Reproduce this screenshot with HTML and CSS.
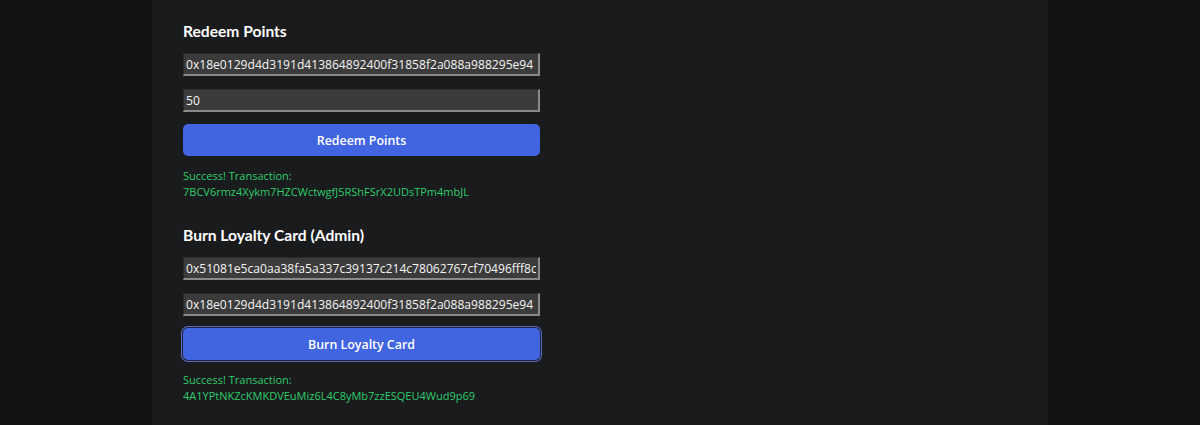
FILE: index.html
```html
<!DOCTYPE html>
<html lang="en">
<head>
<meta charset="utf-8">
<title>Loyalty Admin</title>
<link rel="stylesheet" href="styles.css">
</head>
<body>
<main class="panel">
  <section class="card">
    <h3 class="card-title">Redeem Points</h3>
    <input class="field" type="text" value="0x18e0129d4d3191d413864892400f31858f2a088a988295e94">
    <input class="field" type="text" value="50">
    <button class="btn">Redeem Points</button>
    <p class="status">Success! Transaction:<br>7BCV6rmz4Xykm7HZCWctwgfJ5RShFSrX2UDsTPm4mbJL</p>
  </section>
  <section class="card">
    <h3 class="card-title">Burn Loyalty Card (Admin)</h3>
    <input class="field" type="text" value="0x51081e5ca0aa38fa5a337c39137c214c78062767cf70496fff8c0">
    <input class="field" type="text" value="0x18e0129d4d3191d413864892400f31858f2a088a988295e94">
    <button class="btn btn-focus">Burn Loyalty Card</button>
    <p class="status">Success! Transaction:<br>4A1YPtNKZcKMKDVEuMiz6L4C8yMb7zzESQEU4Wud9p69</p>
  </section>
</main>
</body>
</html>
```
FILE: styles.css
```css
html, body {
  margin: 0;
  padding: 0;
  background: #121214;
  height: 100%;
}
body {
  font-family: "Open Sans", "Noto Sans", sans-serif;
  color: #f2f2f2;
}
.panel {
  max-width: 896px;
  margin: 0 auto;
  min-height: 100%;
  background: #1a1b1d;
  padding: 19px 31px 0;
  box-sizing: border-box;
}
.card {
  width: 357px;
  display: flex;
  flex-direction: column;
}
.card + .card {
  margin-top: 23px;
}
.card-title {
  margin: 0 0 10px;
  font-family: "Lato", "Open Sans", sans-serif;
  font-size: 15.6px;
  line-height: 24px;
  font-weight: 700;
  color: #ffffff;
}
.field {
  height: 23px;
  box-sizing: border-box;
  margin: 0 0 13px;
  padding: 1px 2px;
  font-family: "Open Sans", "Noto Sans", sans-serif;
  font-size: 12.1px;
  color: #f4f4f4;
  background: #3b3b3b;
  border: 2px solid;
  border-color: #2a2a2a #8a8a8a #8a8a8a #2a2a2a;
  border-width: 1px 2px 2px 1px;
  outline: none;
}
.field + .field {
  margin-bottom: 12px;
}
.btn {
  height: 32px;
  border: none;
  border-radius: 5px;
  background: #4164e0;
  color: #ffffff;
  font-family: "Open Sans", "Noto Sans", sans-serif;
  font-size: 12.4px;
  font-weight: 600;
  cursor: pointer;
}
.btn-focus {
  box-shadow: 0 0 0 1px #1f2233, 0 0 0 2px #5a6cc0;
}
.status {
  margin: 12px 0 0;
  font-size: 11px;
  line-height: 16px;
  color: #2fcc6b;
}
```
